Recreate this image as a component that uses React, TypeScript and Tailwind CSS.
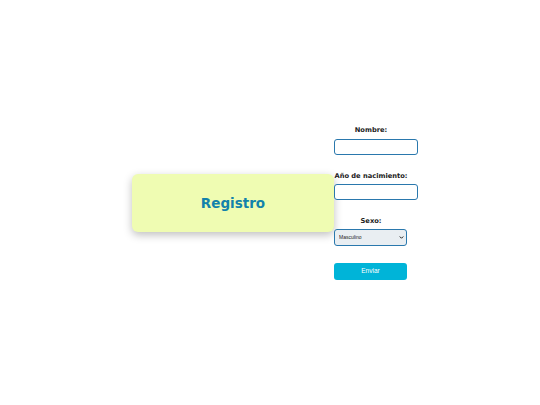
import React, { useState } from 'react';

export default function App() {
  const [sexo, setSexo] = useState('Masculino');

  return (
    <div className="min-h-screen w-full bg-white flex items-center justify-center font-['DejaVu_Sans',sans-serif]">
      {/* Title card */}
      <div className="w-[202px] h-[58px] rounded-[6px] bg-[#effcb2] shadow-[0_3px_8px_rgba(0,0,0,0.25)] flex items-center justify-center">
        <h1 className="mt-[2px] text-[13.5px] font-bold text-[#1282ab] leading-none">Registro</h1>
      </div>

      {/* Form column */}
      <form className="w-[74px] flex flex-col items-start" onSubmit={(e) => e.preventDefault()}>
        <label className="self-stretch text-center text-[6.7px] font-bold text-[#222] leading-[10px]">Nombre:</label>
        <input
          type="text"
          className="block mt-[4px] w-[84px] h-[16px] rounded-[3px] border border-[#2a78ad] bg-white outline-none"
        />

        <label className="self-stretch mt-[16px] text-center text-[6.7px] font-bold text-[#222] leading-[10px] whitespace-nowrap">
          Año de nacimiento:
        </label>
        <input
          type="text"
          className="block mt-[3px] w-[84px] h-[16px] rounded-[3px] border border-[#2a78ad] bg-white outline-none"
        />

        <label className="self-stretch mt-[16px] text-center text-[6.7px] font-bold text-[#222] leading-[10px]">Sexo:</label>
        <div className="relative mt-[3px] w-[73px] h-[17px] leading-none">
          <select
            value={sexo}
            onChange={(e) => setSexo(e.target.value)}
            className="block appearance-none w-full h-full rounded-[3px] border border-[#2a78ad] bg-[#e9eef2] pl-[4px] py-0 text-[5px] leading-none text-[#222] font-['Liberation_Sans',sans-serif] outline-none"
          >
            <option>Masculino</option>
            <option>Femenino</option>
          </select>
          <svg className="pointer-events-none absolute right-[3px] top-[6px] w-[5px] h-[5px]" viewBox="0 0 10 10">
            <path d="M1.5 3 L5 6.5 L8.5 3" fill="none" stroke="#222" strokeWidth="2" />
          </svg>
        </div>

        <button
          type="submit"
          className="block mt-[17px] w-[73px] h-[17px] rounded-[3px] bg-[#00b4d8] text-white text-[6.5px] font-['Liberation_Sans',sans-serif] leading-none"
        >
          Enviar
        </button>
      </form>
    </div>
  );
}
